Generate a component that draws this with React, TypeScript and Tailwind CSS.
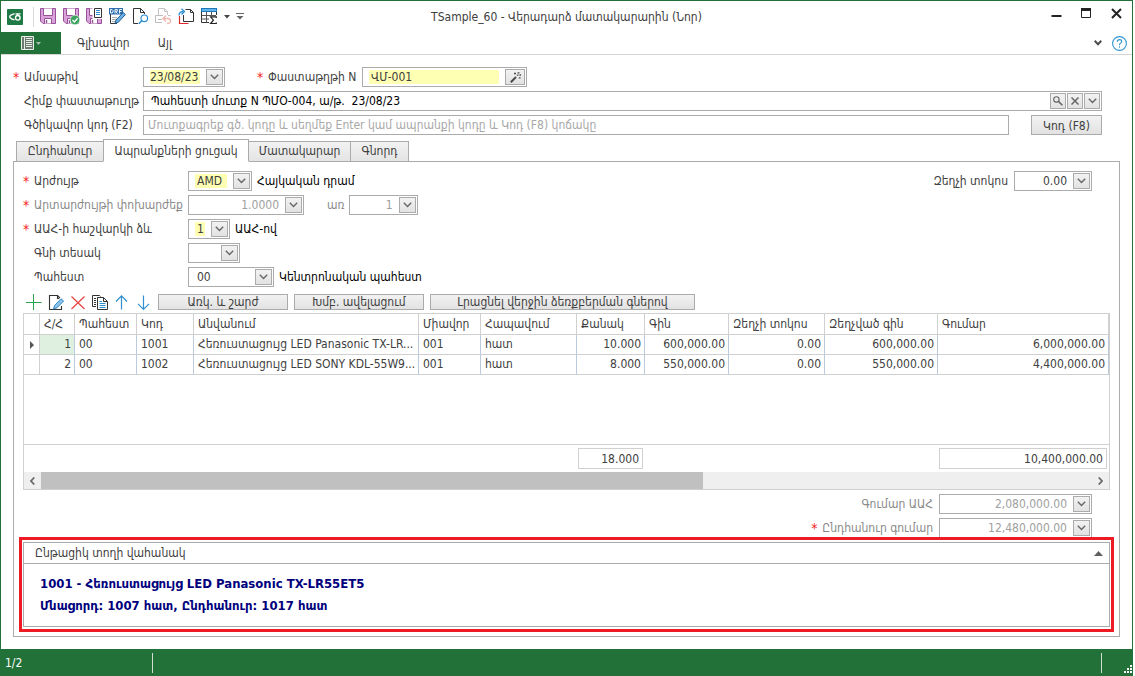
import React, { useState } from 'react';

const ChevronDown = () => (
  <svg width="9" height="6" viewBox="0 0 9 6" fill="none" stroke="#666" strokeWidth="1.4">
    <path d="M0.8 0.8 L4.5 4.4 L8.2 0.8" />
  </svg>
);

const boxButton = 'flex h-4 shrink-0 items-center justify-center border border-[#ababab] bg-linear-to-b from-[#f2f2f2] to-[#e2e2e2]';

type FieldProps = {
  id: string;
  value: string;
  width: string;
  label?: string;
  required?: boolean;
  right?: boolean;
  disabled?: boolean;
};

// Text box with a drop button on its right side
const DropField = ({ id, value, width, label, required, right, disabled }: FieldProps) => {
  const [text, setText] = useState(value);
  return (
    <div className={`flex h-5 shrink-0 items-center border border-[#ababab] bg-white p-px ${width}`}>
      <input
        id={id}
        aria-label={label}
        value={text}
        disabled={disabled}
        onChange={(e) => setText(e.target.value)}
        className={`mr-1.5 ml-[5px] h-3.5 w-0 min-w-0 flex-1 leading-3.5 outline-none disabled:text-[#a0a0a0] ${required ? 'bg-[#ffffb4]' : ''} ${right ? 'text-right' : ''}`}
      />
      <button type="button" aria-label="▾" disabled={disabled} className={`w-[17px] ${boxButton}`}>
        <ChevronDown />
      </button>
    </div>
  );
};

const SelectField = ({ id, value, width, required }: FieldProps) => (
  <div className={`relative flex h-5 shrink-0 items-center border border-[#ababab] bg-white p-px ${width}`}>
    <select
      id={id}
      defaultValue={value}
      className={`mr-1.5 ml-[5px] h-3.5 w-0 min-w-0 flex-1 appearance-none pl-0.5 leading-3.5 outline-none ${required ? 'bg-[#ffffb4]' : ''}`}
    >
      <option value={value}>{value}</option>
    </select>
    <span className={`pointer-events-none w-[17px] ${boxButton}`}>
      <ChevronDown />
    </span>
  </div>
);

const FieldLabel = ({ htmlFor, text, required, muted, width }: { htmlFor: string; text: string; required?: boolean; muted?: boolean; width?: string }) => (
  <label htmlFor={htmlFor} className={`flex shrink-0 whitespace-nowrap ${width ?? ''} ${muted ? 'text-[#8a8a8a]' : ''}`}>
    <span className="w-[11px] shrink-0 text-[14px] leading-5 text-[#f01c1c]">{required ? '*' : ''}</span>
    {text}
  </label>
);

const Floppy = ({ children }: { children?: React.ReactNode }) => (
  <svg width="17" height="17" viewBox="0 0 17 17" fill="none">
    <path d="M0.5 0.5 H15.5 V15.5 H3 L0.5 13 Z" fill="#d9a3d9" stroke="#98509a" />
    <path d="M3.5 0.5 V7.5 H12.5 V0.5" fill="#fff" stroke="#98509a" />
    <path d="M4.5 15.5 V10.5 H11.5 V15.5" fill="#fff" stroke="#98509a" />
    <path d="M6.5 12 V15" stroke="#98509a" strokeWidth="1.4" />
    {children}
  </svg>
);

const toolIcons: { name: string; icon: React.ReactNode }[] = [
  { name: 'Պահպանել', icon: <Floppy /> },
  {
    name: 'Պահպանել և փակել',
    icon: (
      <Floppy>
        <circle cx="12" cy="12" r="4.8" fill="#3aa35c" stroke="#fff" strokeWidth="0.6" />
        <path d="M9.5 12 L11.4 13.9 L14.6 10.3" stroke="#fff" strokeWidth="1.4" />
      </Floppy>
    ),
  },
  {
    name: 'Պահպանել և տպել',
    icon: (
      <Floppy>
        <path d="M6.5 -0.5 H17 V11 H6.5 Z" fill="#fff" />
        <path d="M8.5 0.5 H15.5 V9.5 H8.5 Z" fill="#fff" stroke="#333" />
        <path d="M10 2.5 H14 M10 4.5 H14 M10 6.5 H14" stroke="#2f8fd0" />
      </Floppy>
    ),
  },
  {
    name: 'Սևագիր',
    icon: (
      <svg width="17" height="17" viewBox="0 0 17 17" fill="none">
        <path d="M1.5 6 V15.5 H8" stroke="#333" />
        <path d="M3 9.5 H8 M3 11.5 H7 M3 13.5 H6" stroke="#aaa" />
        <path d="M0 0 H14 V6.5 H0 Z" fill="#2f6fae" />
        <path d="M1.5 1.5 V5 H3 L4 4 V2.5 L3 1.5 Z M6 5.5 V1.5 H8.3 V3.3 H6.5 L8.5 5.5 M10.5 5.5 V1.5 H13 M10.5 3.5 H12.5" stroke="#fff" strokeWidth="0.9" />
        <path d="M6 15.5 L7 12 L14.2 4.6 L16.4 6.6 L9.4 14.2 Z" fill="#69b1e6" stroke="#174f80" strokeWidth="0.9" />
      </svg>
    ),
  },
  {
    name: 'Դիտել',
    icon: (
      <svg width="17" height="17" viewBox="0 0 17 17" fill="none">
        <path d="M6 15.5 H1.5 V0.5 H8.5 L12.5 4.5 V6" stroke="#333" />
        <path d="M8.5 0.5 V4.5 H12.5" stroke="#333" />
        <circle cx="12.3" cy="10.3" r="3.3" stroke="#2f8fd0" strokeWidth="1.2" />
        <path d="M9.8 12.8 L6.8 15.8" stroke="#2f8fd0" strokeWidth="1.6" />
      </svg>
    ),
  },
  {
    name: 'Հետարկել',
    icon: (
      <svg width="17" height="17" viewBox="0 0 17 17" fill="none">
        <path d="M3.5 7 V0.5 H9.5 L12.5 3.5 V7 M9.5 0.5 V3.5 H12.5" stroke="#c4c4c4" />
        <path d="M7 14.5 H0.5 V7.5 H8 M3 11.5 H7 M13 7.5 H15.5" stroke="#bdbdbd" />
        <path d="M11 7.5 L8 10.5 L11 13.5 M8.5 10.5 H13 Q15.5 10.5 15.5 13 Q15.5 15.5 12 15.5" stroke="#f0b4ae" strokeWidth="1.3" />
      </svg>
    ),
  },
  {
    name: 'Պատճենել',
    icon: (
      <svg width="17" height="17" viewBox="0 0 17 17" fill="none">
        <path d="M7.5 1.5 H12.5 L15.5 4.5 V13.5 H5.5 V7 M12.5 1.5 V4.5 H15.5" stroke="#333" />
        <path d="M1.5 8 V15.5 H10.5" stroke="#e02a2a" strokeWidth="1.2" />
        <path d="M1 7.5 Q1 3.5 5.5 3.5 M3.5 0.8 L6.5 3.6 L3.5 6.5" stroke="#2f8fd0" strokeWidth="1.3" />
      </svg>
    ),
  },
  {
    name: 'Աղյուսակ',
    icon: (
      <svg width="17" height="17" viewBox="0 0 17 17" fill="none">
        <path d="M8 14.5 H0.5 V0.5 H15.5 V7" stroke="#333" />
        <path d="M0.5 7.5 H15 M0.5 11 H8 M5.5 4 V14.5 M10.5 4 V7.5" stroke="#555" />
        <path d="M0 0 H16 V4 H0 Z" fill="#1f78b8" />
        <path d="M1 1 H15 V3 H1 Z" fill="#63b4ea" />
        <path d="M15.3 10 V8.9 H9.6 L12.4 12.2 L9.6 15.5 H15.3 V14.4" stroke="#222" strokeWidth="1.2" />
      </svg>
    ),
  },
];

const rowIcons: { name: string; icon: React.ReactNode }[] = [
  {
    name: 'Ավելացնել',
    icon: <path d="M7.5 0 V16 M0 8.5 H15.5" stroke="#2ba251" />,
  },
  {
    name: 'Խմբագրել',
    icon: (
      <>
        <path d="M13.5 12 V15.5 H1.5 V1.5 H9.5 L12 4 M9.5 1.5 V4.5 H11" stroke="#333" strokeWidth="1.1" />
        <path d="M5.5 15 L6.5 11.6 L13 4.8 L15.6 7 L9 13.8 Z" fill="#8ac4ec" stroke="#2980c0" strokeWidth="0.9" />
      </>
    ),
  },
  {
    name: 'Հեռացնել',
    icon: <path d="M1.5 2.5 L14.5 15 M14.5 2.5 L1.5 15" stroke="#e8413c" strokeWidth="1.2" />,
  },
  {
    name: 'Պատճենել տողը',
    icon: (
      <>
        <path d="M4 12.5 H0.5 V1.5 H7.5 L8.5 2.5 M2 4.5 H4 M2 6.5 H4 M2 8.5 H4 M2 10.5 H4" stroke="#333" />
        <path d="M5.5 3.5 H11.5 L15.5 7.5 V15.5 H5.5 Z M11.5 3.5 V7.5 H15.5" fill="#fff" stroke="#333" />
        <path d="M7.5 7.5 H10 M7.5 9.5 H13.5 M7.5 11.5 H13.5 M7.5 13.5 H13.5" stroke="#2f8fd0" />
      </>
    ),
  },
  {
    name: 'Վերև',
    icon: <path d="M7.5 1.5 V15.5 M2 7.5 L7.5 1.8 L13 7.5" stroke="#2f8fd0" strokeWidth="1.2" />,
  },
  {
    name: 'Ներքև',
    icon: <path d="M7.5 1.5 V15.5 M2 9.8 L7.5 15.3 L13 9.8" stroke="#2f8fd0" strokeWidth="1.2" />,
  },
];

const columns = [
  { title: 'Հ/Հ', width: 'w-[35px]', right: true },
  { title: 'Պահեստ', width: 'w-[62px]' },
  { title: 'Կոդ', width: 'w-[57px]' },
  { title: 'Անվանում', width: 'w-[225px]' },
  { title: 'Միավոր', width: 'w-[62px]' },
  { title: 'Հապավում', width: 'w-24' },
  { title: 'Քանակ', width: 'w-[68px]', right: true },
  { title: 'Գին', width: 'w-[84px]', right: true },
  { title: 'Զեղչի տոկոս', width: 'w-24', right: true },
  { title: 'Զեղչված գին', width: 'w-[113px]', right: true },
  { title: 'Գումար', width: 'w-auto', right: true },
];

const rows = [
  ['1', '00', '1001', 'Հեռուստացույց LED Panasonic TX-LR...', '001', 'հատ', '10.000', '600,000.00', '0.00', '600,000.00', '6,000,000.00'],
  ['2', '00', '1002', 'Հեռուստացույց LED SONY KDL-55W9...', '001', 'հատ', '8.000', '550,000.00', '0.00', '550,000.00', '4,400,000.00'],
];

const tabs = ['Ընդհանուր', 'Ապրանքների ցուցակ', 'Մատակարար', 'Գնորդ'];
const tabWidths = ['w-[88px]', 'w-[146px]', 'w-[103px]', 'w-[59px]'];

const TitleBar = () => (
  <header className="grid h-[31px] grid-cols-[1fr_auto_1fr] items-center">
    <div className="flex items-center pl-1.5">
      <svg width="16" height="16" viewBox="0 0 16 16" fill="none" className="shrink-0">
        <rect width="16" height="16" rx="1" fill="#1f7a45" />
        <path d="M7.5 4.6 L4 6 Q2 7.3 3.2 8.8 Q4.5 10.5 7.5 10.8" stroke="#fff" strokeWidth="1.4" />
        <path d="M8.5 4.8 H13.5 M10 5 L11.5 6.8" stroke="#fff" strokeWidth="1.3" />
        <circle cx="10.8" cy="8.8" r="2.3" stroke="#fff" strokeWidth="1.4" />
      </svg>
      <div className="ml-2.5 h-5 w-px bg-[#d8d8d8]" />
      <div className="ml-1.5 flex items-center gap-1.5">
        {toolIcons.map((t) => (
          <button key={t.name} type="button" aria-label={t.name} className="size-[17px]">
            {t.icon}
          </button>
        ))}
        <svg width="6" height="4" viewBox="0 0 6 4" fill="#444"><path d="M0 0 H6 L3 3.5 Z" /></svg>
        <svg width="8" height="7" viewBox="0 0 8 7" fill="#666"><path d="M0 0 H8 V1 H0 Z M0.5 3 H7.5 L4 6.5 Z" /></svg>
      </div>
    </div>
    <h1 className="text-center whitespace-nowrap">TSample_60 - Վերադարձ մատակարարին (Նոր)</h1>
    <div className="flex justify-end gap-[19px] pr-2.5 pb-1.5">
      <button type="button" aria-label="Minimize">
        <svg width="11" height="11" viewBox="0 0 11 11"><path d="M0.5 7 H10.5 V9 H0.5 Z" fill="#222" /></svg>
      </button>
      <button type="button" aria-label="Maximize">
        <svg width="11" height="11" viewBox="0 0 11 11" fill="none"><path d="M0.5 1 V9.5 H9.5 V1" stroke="#222" /><path d="M0 0 H10 V3 H0 Z" fill="#222" /></svg>
      </button>
      <button type="button" aria-label="Close">
        <svg width="11" height="11" viewBox="0 0 11 11" stroke="#222" strokeWidth="2"><path d="M1 1 L10 10 M10 1 L1 10" /></svg>
      </button>
    </div>
  </header>
);

const Ribbon = () => (
  <nav className="flex h-[23px] items-center border-b border-[#d5d5d5]">
    <button type="button" aria-label="Մենյու" className="flex h-[22px] w-[60px] items-center justify-center gap-0.5 bg-[#217138]">
      <svg width="13" height="14" viewBox="0 0 13 14" fill="none">
        <path d="M0.5 0.5 H12.5 V13.5 H0.5 Z" fill="#6d7a70" stroke="#e8efe9" />
        <path d="M3.5 0.5 V13.5" stroke="#e8efe9" />
        <path d="M5 2.5 H11 M5 4.5 H11 M5 6.5 H11 M5 8.5 H11 M5 10.5 H11" stroke="#e8efe9" />
      </svg>
      <svg width="5" height="3" viewBox="0 0 5 3" fill="#a6bfac"><path d="M0 0 H5 L2.5 3 Z" /></svg>
    </button>
    <a href="#main" className="ml-4">Գլխավոր</a>
    <a href="#other" className="ml-7">Այլ</a>
    <div className="ml-auto flex items-center gap-2.5 pr-[5px]">
      <svg width="8" height="6" viewBox="0 0 8 6" fill="none" stroke="#4d4d4d" strokeWidth="2"><path d="M0.7 0.8 L4 4.2 L7.3 0.8" /></svg>
      <button type="button" aria-label="Help">
        <svg width="15" height="15" viewBox="0 0 15 15" fill="none" stroke="#2f95cf" strokeWidth="1.1">
          <circle cx="7.5" cy="7.5" r="6.9" />
          <path d="M5.3 5.8 Q5.3 3.6 7.5 3.6 Q9.7 3.6 9.7 5.5 Q9.7 6.7 8.4 7.3 Q7.5 7.8 7.5 9.2" />
          <path d="M7.5 10.3 V11.7" />
        </svg>
      </button>
    </div>
  </nav>
);

const DocumentFields = () => (
  <section className="flex flex-col gap-1 pt-3 pr-[30px] pl-3">
    <div className="flex h-5 items-center">
      <FieldLabel htmlFor="date" text="Ամսաթիվ" required width="w-[130px]" />
      <DropField id="date" value="23/08/23" width="w-[82px]" required />
      <div className="ml-8 flex items-center">
        <FieldLabel htmlFor="docNumber" text="Փաստաթղթի N" required width="w-[105px]" />
        <div className="flex h-5 w-[165px] items-center border border-[#ababab] p-px">
          <input id="docNumber" defaultValue="ՎՄ-001" className="mr-1.5 ml-[5px] h-3.5 w-0 flex-1 bg-[#ffffb4] pl-0.5 leading-3.5 outline-none" />
          <button type="button" aria-label="Նոր համար" className={`w-5 ${boxButton}`}>
            <svg width="11" height="11" viewBox="0 0 11 11" fill="none" stroke="#4a4a4a">
              <path d="M0.8 10.2 L6 5" strokeWidth="2" />
              <path d="M4 1.5 H6 M7.5 0.8 H9.5 M9.5 3 H11 M6.8 3.2 H8.5 M8.8 5.8 H10.5" strokeWidth="1.3" />
            </svg>
          </button>
        </div>
      </div>
    </div>
    <div className="flex h-5 items-center">
      <FieldLabel htmlFor="basis" text="Հիմք փաստաթուղթ" width="w-[130px]" />
      <div className="flex h-5 flex-1 items-center gap-px border border-[#ababab] p-px text-black">
        <input id="basis" defaultValue="Պահեստի մուտք N ՊՄՕ-004, ա/թ.  23/08/23" className="h-4 w-0 flex-1 pl-1.5 outline-none" />
        <button type="button" aria-label="Որոնել" className={`w-4 ${boxButton}`}>
          <svg width="10" height="10" viewBox="0 0 10 10" fill="none" stroke="#666"><circle cx="3.4" cy="3.4" r="2.7" strokeWidth="1.1" /><path d="M5.4 5.4 L9.4 9.2" strokeWidth="1.5" /></svg>
        </button>
        <button type="button" aria-label="Մաքրել" className={`w-4 ${boxButton}`}>
          <svg width="8" height="8" viewBox="0 0 8 8" stroke="#666" strokeWidth="1.5"><path d="M0.5 0.5 L7.5 7.5 M7.5 0.5 L0.5 7.5" /></svg>
        </button>
        <button type="button" aria-label="Բացել" className={`w-4 ${boxButton}`}>
          <ChevronDown />
        </button>
      </div>
    </div>
    <div className="flex h-5 items-center">
      <FieldLabel htmlFor="barcode" text="Գծիկավոր կոդ (F2)" width="w-[130px]" />
      <input
        id="barcode"
        placeholder="Մուտքագրեք գծ. կոդը և սեղմեք Enter կամ ապրանքի կոդը և Կոդ (F8) կոճակը"
        className="h-5 w-0 flex-1 border border-[#ababab] px-1 outline-none placeholder:text-[#a8a8a8]"
      />
      <button type="button" className="ml-[22px] h-5 w-[71px] border border-[#ababab] bg-linear-to-b from-[#f2f2f2] to-[#e2e2e2]">Կոդ (F8)</button>
    </div>
  </section>
);

const ItemsTable = () => (
  <div className="mr-[9px] ml-[9px] border border-[#d0d0d0]">
    <table className="w-full table-fixed border-separate border-spacing-0 leading-[19px]">
      <thead>
        <tr className="h-[21px]">
          <th aria-label="Ընթացիկ տող" className="w-4 border-r border-b border-[#d0d0d0] p-0" />
          {columns.map((c) => (
            <th key={c.title} className={`border-r border-b border-[#d0d0d0] px-0 pl-1 text-left font-normal whitespace-nowrap ${c.width}`}>
              {c.title}
            </th>
          ))}
        </tr>
      </thead>
      <tbody>
        {rows.map((row, r) => (
          <tr key={row[0]} className="h-5">
            <td className="border-r border-b border-[#d0d0d0] p-0">
              {r === 0 && <svg width="4" height="8" viewBox="0 0 4 8" fill="#555" className="ml-1.5"><path d="M0 0 L4 4 L0 8 Z" /></svg>}
            </td>
            {row.map((cell, i) => (
              <td
                key={columns[i].title}
                className={`border-r border-b border-r-[#bccadd] border-b-[#d0d0d0] py-0 whitespace-nowrap ${columns[i].right ? 'pr-[3px] pl-1 text-right' : 'pr-0 pl-1'} ${r === 0 && i === 0 ? 'bg-[#dff0e0]' : ''}`}
              >
                {cell}
              </td>
            ))}
          </tr>
        ))}
        <tr className="h-[70px]">
          <td colSpan={12} className="border-b border-[#d0d0d0] p-0" />
        </tr>
      </tbody>
      <tfoot>
        <tr className="h-[27px]">
          <td colSpan={7} className="p-0" />
          <td className="py-0 pr-0.5 pl-px"><div className="h-[21px] border border-[#d0d0d0] pr-[3px] text-right leading-5">18.000</div></td>
          <td colSpan={3} className="p-0" />
          <td className="py-0 pr-0.5 pl-px"><div className="h-[21px] border border-[#d0d0d0] pr-[3px] text-right leading-5">10,400,000.00</div></td>
        </tr>
      </tfoot>
    </table>
    <div className="flex h-[17px] bg-[#efefef]">
      <button type="button" aria-label="Ձախ" className="flex w-[17px] items-center justify-center">
        <svg width="5" height="8" viewBox="0 0 5 8" fill="none" stroke="#666" strokeWidth="1.7"><path d="M4.3 0.5 L1 4 L4.3 7.5" /></svg>
      </button>
      <div className="flex-1"><div className="h-full w-[63%] bg-[#c0c0c0]" /></div>
      <button type="button" aria-label="Աջ" className="flex w-[17px] items-center justify-center">
        <svg width="5" height="8" viewBox="0 0 5 8" fill="none" stroke="#666" strokeWidth="1.7"><path d="M0.7 0.5 L4 4 L0.7 7.5" /></svg>
      </button>
    </div>
  </div>
);

const toolButton = 'h-4 border border-[#ababab] bg-linear-to-b from-[#f2f2f2] to-[#e2e2e2] leading-3.5 whitespace-nowrap';

const ItemsPanel = () => (
  <section className="mr-3 ml-3 border border-[#ababab] pt-[9px] pb-1">
    <div className="flex flex-col gap-1 pr-[27px] pl-[9px]">
      <div className="flex h-5 items-center">
        <FieldLabel htmlFor="currency" text="Արժույթ" required width="w-[165px]" />
        <SelectField id="currency" value="AMD" width="w-16" required />
        <span className="ml-[5px] text-black">Հայկական դրամ</span>
        <div className="ml-auto flex items-center gap-1.5">
          <FieldLabel htmlFor="discount" text="Զեղչի տոկոս" />
          <DropField id="discount" value="0.00" width="w-[78px]" right />
        </div>
      </div>
      <div className="flex h-5 items-center">
        <FieldLabel htmlFor="rate" text="Արտարժույթի փոխարժեք" required muted width="w-[165px]" />
        <DropField id="rate" value="1.0000" width="w-[116px]" right disabled />
        <div className="ml-3 flex items-center gap-1">
          <FieldLabel htmlFor="per" text="առ" muted />
          <DropField id="per" value="1" width="w-[69px]" right disabled />
        </div>
      </div>
      <div className="flex h-5 items-center">
        <FieldLabel htmlFor="vat" text="ԱԱՀ-ի հաշվարկի ձև" required width="w-[165px]" />
        <SelectField id="vat" value="1" width="w-[42px]" required />
        <span className="ml-[5px] text-black">ԱԱՀ-ով</span>
      </div>
      <div className="flex h-5 items-center">
        <FieldLabel htmlFor="priceType" text="Գնի տեսակ" width="w-[165px]" />
        <SelectField id="priceType" value="" width="w-[52px]" />
      </div>
      <div className="flex h-5 items-center">
        <FieldLabel htmlFor="store" text="Պահեստ" width="w-[165px]" />
        <SelectField id="store" value="00" width="w-[86px]" />
        <span className="ml-[5px] text-black">Կենտրոնական պահեստ</span>
      </div>
    </div>

    <div className="mt-1.5 mb-[3px] flex h-[17px] items-center pl-3">
      <div className="flex gap-1.5">
        {rowIcons.map((t) => (
          <button key={t.name} type="button" aria-label={t.name} className="size-4">
            <svg width="16" height="16" viewBox="0 0 16 16" fill="none">{t.icon}</svg>
          </button>
        ))}
      </div>
      <div className="ml-1.5 flex gap-1.5">
        <button type="button" className={`w-[130px] ${toolButton}`}>Առկ. և շարժ</button>
        <button type="button" className={`w-[130px] ${toolButton}`}>Խմբ. ավելացում</button>
        <button type="button" className={`w-[265px] ${toolButton}`}>Լրացնել վերջին ձեռքբերման գներով</button>
      </div>
    </div>

    <ItemsTable />

    <div className="mt-1 flex flex-col items-end gap-1 pr-[27px]">
      <div className="flex h-5 items-center gap-1.5">
        <FieldLabel htmlFor="vatSum" text="Գումար ԱԱՀ" muted />
        <DropField id="vatSum" value="2,080,000.00" width="w-[153px]" right disabled />
      </div>
      <div className="flex h-5 items-center gap-1.5">
        <FieldLabel htmlFor="totalSum" text="Ընդհանուր գումար" required muted />
        <DropField id="totalSum" value="12,480,000.00" width="w-[153px]" right disabled />
      </div>
    </div>

    <div className="relative -mt-px mr-[5px] ml-[5px] border-3 border-[#ed1c24] px-px py-0.5">
      <div className="border border-[#ababab]">
        <div className="flex h-[21px] items-center justify-between border-b border-[#ababab] pr-1.5 pl-[11px]">
          <span>Ընթացիկ տողի վահանակ</span>
          <button type="button" aria-label="Ծալել">
            <svg width="9" height="5" viewBox="0 0 9 5" fill="#606060"><path d="M4.5 0 L9 5 H0 Z" /></svg>
          </button>
        </div>
        <div className="px-4 pt-[9px] pb-[9px] text-[13px] leading-[22px] font-bold text-[#00007d]">
          <p>1001 - Հեռուստացույց LED Panasonic TX-LR55ET5</p>
          <p>Մնացորդ: 1007 հատ, Ընդհանուր: 1017 հատ</p>
        </div>
      </div>
    </div>
  </section>
);

const App: React.FC = () => {
  const [activeTab, setActiveTab] = useState(1);

  return (
    <div className="flex min-h-screen flex-col bg-white pr-0.5 font-['DejaVu_Sans_Condensed','DejaVu_Sans',sans-serif] text-[12px] leading-5 text-[#404040]">
      <div className="flex flex-1 flex-col border-x border-t border-[#217138]">
        <TitleBar />
        <Ribbon />
        <main className="flex-1 pb-3">
          <DocumentFields />
          <div role="tablist" className="relative mt-1 -mb-px flex items-end pl-[15px]">
            {tabs.map((tab, i) => (
              <button
                key={tab}
                type="button"
                role="tab"
                aria-selected={activeTab === i}
                onClick={() => setActiveTab(i)}
                className={`-mr-px border border-[#ababab] text-center whitespace-nowrap ${tabWidths[i]} ${activeTab === i ? 'relative h-[23px] border-b-white bg-white' : 'h-[21px] bg-linear-to-b from-[#f2f2f2] to-[#e4e4e4] leading-[19px]'}`}
              >
                {tab}
              </button>
            ))}
          </div>
          <ItemsPanel />
        </main>
      </div>
      <footer className="flex h-[27px] items-center justify-between bg-[#217138] text-white">
        <span className="flex h-5 w-[153px] items-center border-r border-[#cfe0d3] pl-[5px]">1/2</span>
        <div className="flex h-5 w-8 items-end justify-end border-l border-[#cfe0d3]">
          <svg width="8" height="8" viewBox="0 0 8 8" fill="#fff" className="mr-px">
            <path d="M6 0 H8 V2 H6 Z M3 3 H5 V5 H3 Z M6 3 H8 V5 H6 Z M0 6 H2 V8 H0 Z M3 6 H5 V8 H3 Z M6 6 H8 V8 H6 Z" />
          </svg>
        </div>
      </footer>
    </div>
  );
};

export default App;
